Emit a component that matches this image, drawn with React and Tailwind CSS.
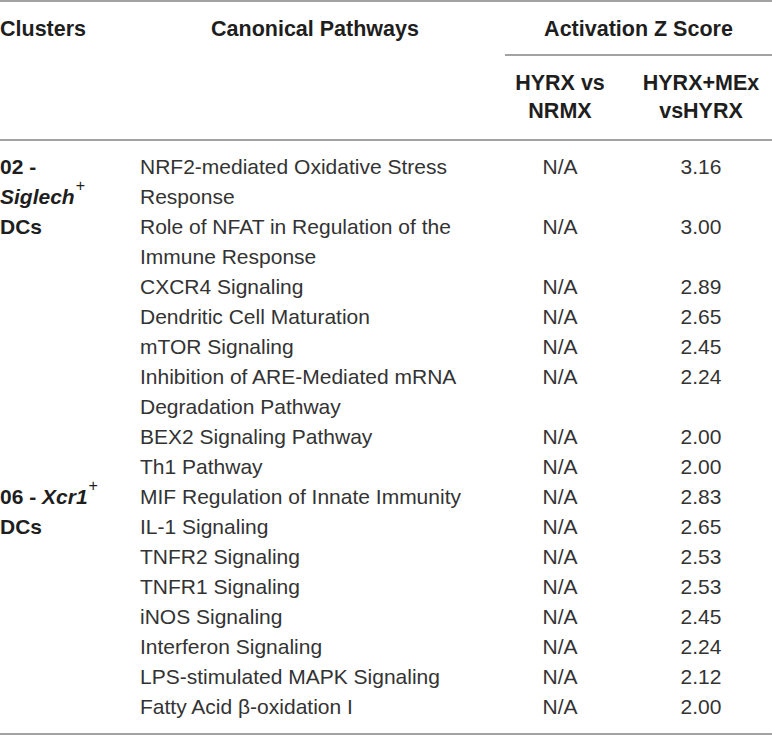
import React from 'react';

const Plus = () => <sup className="text-[16px] font-normal leading-none align-[5px] ml-[1px]">+</sup>;

const groups = [
  {
    label: (
      <>
        02 -<br />
        <i>Siglech</i>
        <Plus />
        <br />
        DCs
      </>
    ),
    rows: [
      [['NRF2-mediated Oxidative Stress', 'Response'], '3.16'],
      [['Role of NFAT in Regulation of the', 'Immune Response'], '3.00'],
      [['CXCR4 Signaling'], '2.89'],
      [['Dendritic Cell Maturation'], '2.65'],
      [['mTOR Signaling'], '2.45'],
      [['Inhibition of ARE-Mediated mRNA', 'Degradation Pathway'], '2.24'],
      [['BEX2 Signaling Pathway'], '2.00'],
      [['Th1 Pathway'], '2.00'],
    ],
  },
  {
    label: (
      <>
        06 - <i>Xcr1</i>
        <Plus />
        <br />
        DCs
      </>
    ),
    rows: [
      [['MIF Regulation of Innate Immunity'], '2.83'],
      [['IL-1 Signaling'], '2.65'],
      [['TNFR2 Signaling'], '2.53'],
      [['TNFR1 Signaling'], '2.53'],
      [['iNOS Signaling'], '2.45'],
      [['Interferon Signaling'], '2.24'],
      [['LPS-stimulated MAPK Signaling'], '2.12'],
      [['Fatty Acid β-oxidation I'], '2.00'],
    ],
  },
];

export default function App() {
  return (
    <div className="w-[772px] h-[736px] bg-white font-['Liberation_Sans',Arial,sans-serif] text-[21px]">
      {/* header */}
      <div className="grid grid-cols-[140px_365px_1fr] border-t-2 border-b-2 border-[#a3a3a3] font-bold text-[#1e1e1e] text-[21.5px]">
        <div className="pt-[12px] leading-[30px]">Clusters</div>
        <div className="pt-[12px] leading-[30px] text-center pr-[15px]">Canonical Pathways</div>
        <div>
          <div className="pt-[12px] pb-[10px] leading-[30px] text-center border-b-2 border-[#a3a3a3]">
            Activation Z Score
          </div>
          <div className="grid grid-cols-[110px_1fr] pt-[13px] pb-[14px] leading-[28px] text-center">
            <div>
              HYRX vs<br />NRMX
            </div>
            <div className="pl-[15px]">
              HYRX+MEx<br />vsHYRX
            </div>
          </div>
        </div>
      </div>

      {/* body */}
      <div className="pt-[11px] pb-[11px] border-b-2 border-[#a3a3a3] leading-[30px] text-[#333333]">
        {groups.map((g, gi) => (
          <div key={gi} className="grid grid-cols-[140px_1fr]">
            <div className="font-bold text-[#1e1e1e]">{g.label}</div>
            <div>
              {g.rows.map(([lines, val], ri) => (
                <div key={ri} className="grid grid-cols-[365px_110px_1fr]">
                  <div>
                    {lines.map((l, li) => (
                      <div key={li}>{l}</div>
                    ))}
                  </div>
                  <div className="text-center">N/A</div>
                  <div className="text-center pl-[15px]">{val}</div>
                </div>
              ))}
            </div>
          </div>
        ))}
      </div>
    </div>
  );
}
